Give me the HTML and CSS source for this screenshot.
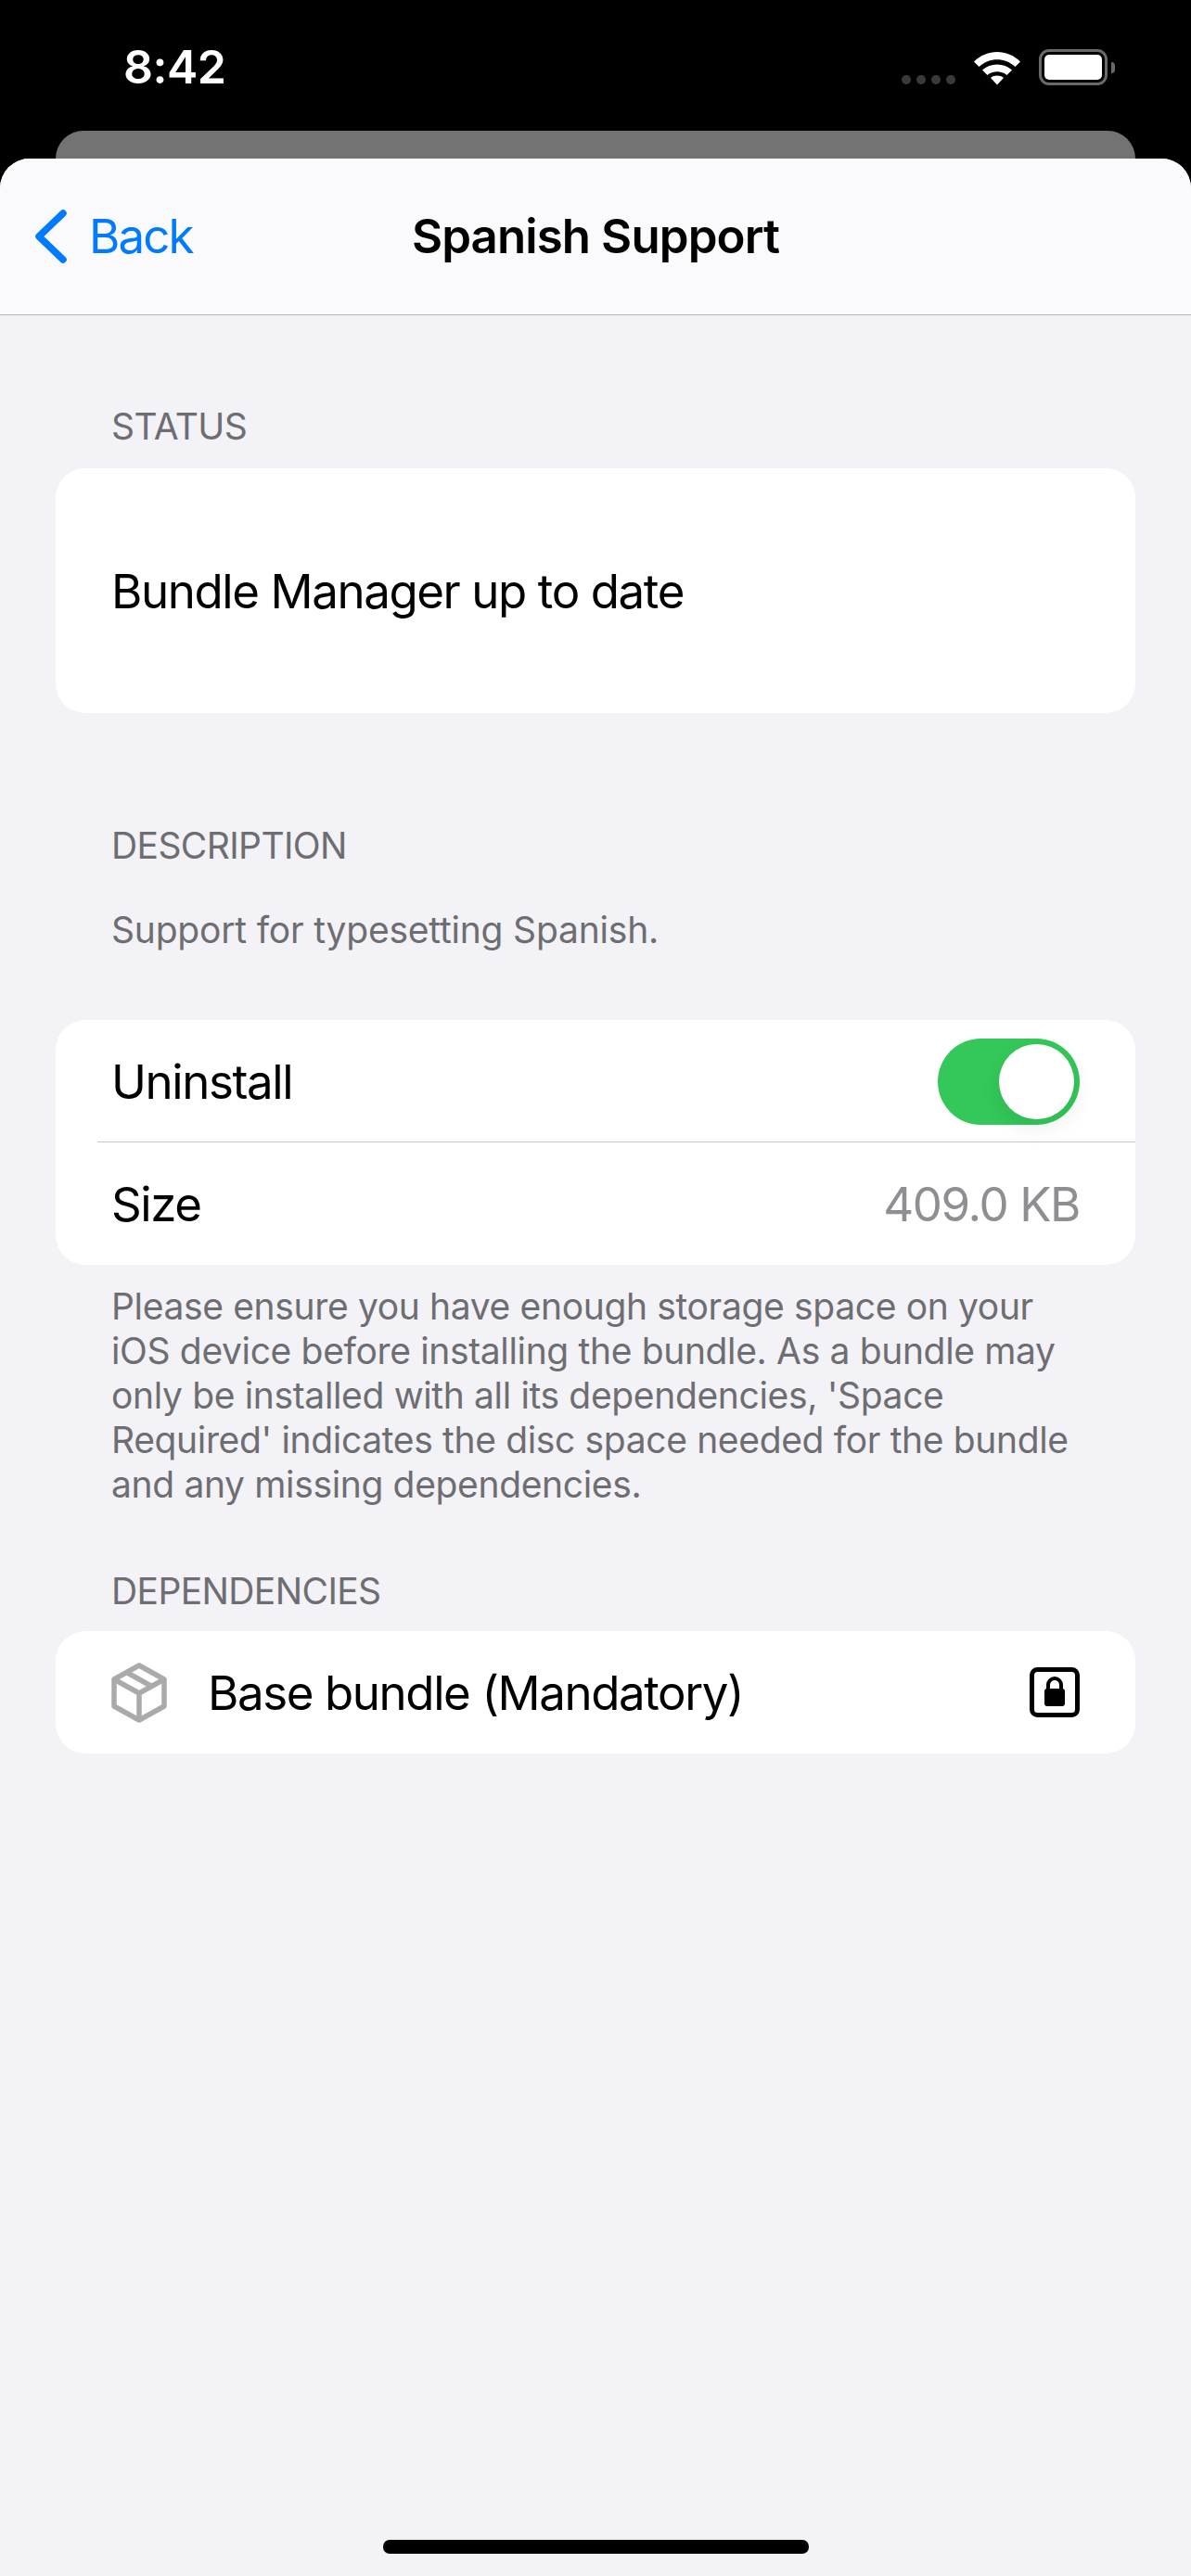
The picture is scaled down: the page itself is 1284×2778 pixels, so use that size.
FILE: index.html
```html
<!DOCTYPE html>
<html lang="en">
<head>
    <meta charset="UTF-8">
    <meta name="viewport" content="width=device-width, initial-scale=1.0">
    <title>Spanish Support</title>
    <link rel="stylesheet" href="styles.css">
</head>
<body>
    <header class="status-bar">
        <span class="clock">8:42</span>
        <div class="status-icons">
            <div class="signal">
                <span class="signal-dot"></span>
                <span class="signal-dot"></span>
                <span class="signal-dot"></span>
                <span class="signal-dot"></span>
            </div>
            <svg class="wifi" width="52" height="38" viewBox="0 0 52 38">
                <path d="M1 12.5 C15 -1.5 37 -1.5 51 12.5 L45.5 18 C34.5 7.5 17.5 7.5 6.500 18 Z" fill="#fff"/>
                <path d="M10 21.500 C18.500 13.500 33.500 13.500 42 21.500 L36.500 27 C30.500 22 21.500 22 15.500 27 Z" fill="#fff"/>
                <path d="M19 30 C23 26.800 29 26.800 33 30 L26 37.500 Z" fill="#fff"/>
            </svg>
            <div class="battery">
                <div class="battery-body"><div class="battery-level"></div></div>
                <span class="battery-cap"></span>
            </div>
        </div>
    </header>

    <div class="back-card"></div>

    <div class="sheet">
        <nav class="nav-bar">
            <a class="back-link">
                <svg class="back-chevron" width="36" height="58" viewBox="0 0 36 58">
                    <path d="M31 4 L5 29 L31 54" fill="none" stroke="#007aff" stroke-width="7.500" stroke-linecap="round" stroke-linejoin="round"/>
                </svg>
                <span>Back</span>
            </a>
            <h1 class="nav-title">Spanish Support</h1>
        </nav>

        <main class="content">
            <h2 class="section-label label-status">STATUS</h2>
            <section class="card status-card">Bundle Manager up to date</section>

            <h2 class="section-label label-description">DESCRIPTION</h2>
            <p class="description">Support for typesetting Spanish.</p>

            <section class="card">
                <div class="row row-divider">
                    <span>Uninstall</span>
                    <div class="toggle"><span class="toggle-knob"></span></div>
                </div>
                <div class="row">
                    <span>Size</span>
                    <span class="row-value">409.0 KB</span>
                </div>
            </section>
            <p class="footnote">Please ensure you have enough storage space on your<br>iOS device before installing the bundle. As a bundle may<br>only be installed with all its dependencies, 'Space<br>Required' indicates the disc space needed for the bundle<br>and any missing dependencies.</p>

            <h2 class="section-label label-dependencies">DEPENDENCIES</h2>
            <section class="card">
                <div class="row dependency-row">
                    <svg class="box-icon" width="60" height="65" viewBox="0 0 60 65">
                        <path d="M30 3 L57 18 V47 L30 62 L3 47 V18 Z" fill="none" stroke="#aaaaaa" stroke-width="5.500" stroke-linejoin="round"/>
                        <path d="M3 18 L30 33 L57 18 M30 33 V62" fill="none" stroke="#aaaaaa" stroke-width="5.500" stroke-linejoin="round"/>
                        <path d="M16.500 10.500 L43.500 25.500" fill="none" stroke="#aaaaaa" stroke-width="5.500"/>
                    </svg>
                    <span class="dependency-name">Base bundle (Mandatory)</span>
                    <svg class="lock-icon" width="54" height="54" viewBox="0 0 54 54">
                        <rect x="2.500" y="2.500" width="49" height="49" rx="6" fill="none" stroke="#000" stroke-width="5"/>
                        <path d="M20 24 V19 a7 7 0 0 1 14 0 V24" fill="none" stroke="#000" stroke-width="4"/>
                        <rect x="16" y="23" width="22" height="19" rx="3" fill="#000"/>
                    </svg>
                </div>
            </section>
        </main>
    </div>

    <div class="home-indicator"></div>
</body>
</html>
```

FILE: styles.css
```css
* {
    box-sizing: border-box;
}

html, body {
    height: 100%;
}

body {
    background-color: #000;
    color: #000;
    font-family: 'Inter', 'Liberation Sans', sans-serif;
    margin: 0;
    display: flex;
    flex-direction: column;
    position: relative;
    overflow: hidden;
}

/* Status bar */
.status-bar {
    height: 141px;
    flex-shrink: 0;
    display: flex;
    justify-content: space-between;
    align-items: flex-start;
    padding: 44px 82px 0 133px;
}

.clock {
    color: #fff;
    font-size: 50px;
    font-weight: 600;
    line-height: 56px;
    letter-spacing: -0.5px;
}

.status-icons {
    display: flex;
    align-items: flex-end;
    padding-top: 9px;
}

.signal {
    display: flex;
    gap: 6px;
    margin-right: 19px;
    margin-bottom: 1px;
}

.signal-dot {
    width: 10px;
    height: 10px;
    border-radius: 50%;
    background-color: #3a3a3a;
}

.wifi {
    margin-right: 19px;
}

.battery {
    display: flex;
    align-items: center;
}

.battery-body {
    width: 74px;
    height: 39px;
    padding: 3px;
    border: 3px solid #6a6a6a;
    border-radius: 11px;
}

.battery-level {
    height: 100%;
    background-color: #fff;
    border-radius: 5px;
}

.battery-cap {
    width: 4px;
    height: 12px;
    margin-left: 4px;
    background-color: #6a6a6a;
    border-radius: 0 4px 4px 0;
}

.back-card {
    height: 30px;
    flex-shrink: 0;
    margin: 0 60px;
    background-color: #737373;
    border-radius: 30px 30px 0 0;
}

/* Sheet */
.sheet {
    flex: 1;
    display: flex;
    flex-direction: column;
    background-color: #f2f2f7;
    border-radius: 32px 32px 0 0;
    overflow: hidden;
}

.nav-bar {
    height: 169px;
    flex-shrink: 0;
    display: flex;
    align-items: center;
    justify-content: center;
    position: relative;
    background-color: #fafafd;
    border-bottom: 1px solid #b3b3b3;
}

.back-link {
    position: absolute;
    left: 37px;
    top: 54px;
    display: flex;
    align-items: center;
    gap: 23px;
    color: #007aff;
    font-size: 51px;
    line-height: 60px;
    letter-spacing: -1.9px;
}

.nav-title {
    margin: 0;
    font-size: 51px;
    font-weight: 600;
    line-height: 60px;
    letter-spacing: -0.9px;
}

.content {
    display: flex;
    flex-direction: column;
    padding: 0 60px;
}

.section-label {
    margin: 0;
    padding-left: 60px;
    color: #6d6d72;
    font-size: 39px;
    font-weight: 400;
    line-height: 46px;
    letter-spacing: -0.6px;
}

.label-status {
    margin-top: 97px;
    margin-bottom: 22px;
}

.label-description {
    margin-top: 120px;
}

.label-dependencies {
    margin-top: 68px;
    margin-bottom: 20px;
}

.card {
    background-color: #fff;
    border-radius: 32px;
    font-size: 51px;
    letter-spacing: -1.4px;
}

.status-card {
    height: 264px;
    display: flex;
    align-items: center;
    padding-left: 60px;
}

.description {
    margin: 45px 0 74px;
    padding-left: 60px;
    color: #6d6d72;
    font-size: 39px;
    line-height: 46px;
    letter-spacing: -0.2px;
}

.row {
    height: 132px;
    display: flex;
    align-items: center;
    justify-content: space-between;
    padding: 0 60px;
    position: relative;
}

.row-divider::after {
    content: "";
    position: absolute;
    left: 45px;
    right: 0;
    bottom: 0;
    height: 1px;
    background-color: #c6c6c8;
}

.row-value {
    color: #8e8e93;
}

.toggle {
    width: 153px;
    height: 93px;
    padding: 6px;
    display: flex;
    justify-content: flex-end;
    background-color: #34c759;
    border-radius: 47px;
}

.toggle-knob {
    width: 81px;
    height: 81px;
    background-color: #fff;
    border-radius: 50%;
    box-shadow: 0 9px 24px rgba(0, 0, 0, 0.08);
}

.footnote {
    margin: 21px 0 0;
    padding: 0 60px;
    color: #6d6d72;
    font-size: 39px;
    line-height: 48px;
    letter-spacing: -0.35px;
}

.dependency-row {
    justify-content: flex-start;
}

.box-icon {
    flex-shrink: 0;
}

.dependency-name {
    flex: 1;
    margin-left: 44px;
}

.lock-icon {
    flex-shrink: 0;
}

.home-indicator {
    position: absolute;
    left: 413px;
    bottom: 24px;
    width: 459px;
    height: 15px;
    background-color: #000;
    border-radius: 7px;
}
```
